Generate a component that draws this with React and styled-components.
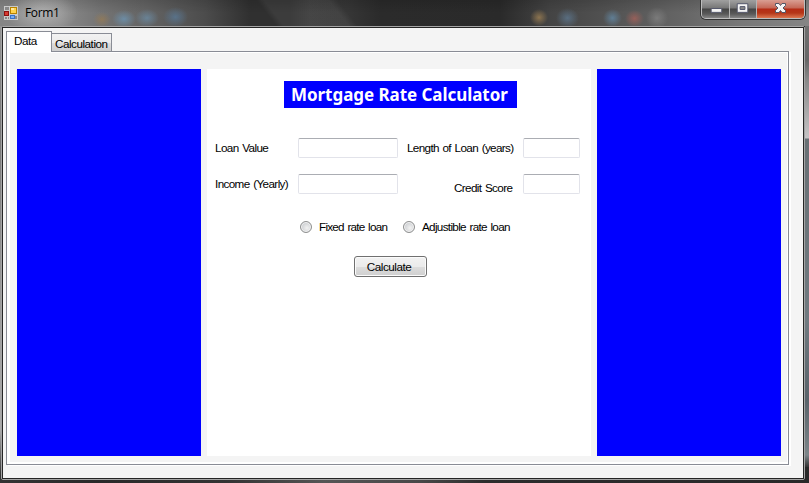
import React from 'react';
import styled, { createGlobalStyle } from 'styled-components';

const GlobalStyle = createGlobalStyle`
  * { box-sizing: border-box; }
  html, body { margin: 0; padding: 0; overflow: hidden; }
`;

const Window = styled.div`
  width: 809px;
  height: 483px;
  display: flex;
  flex-direction: column;
  padding: 0 4px 3px 1px;
  font: 11.7px/14px 'Liberation Sans', Arial, sans-serif;
  word-spacing: 1px;
  color: #000;
  background:
    linear-gradient(#777 0, #666 60px, #888 80px, #c5c3c4 138px, #687074 139px, #707a80 320px, #59636a 400px, #7c8589 455px, #333 467px) right 0 top 0 / 4px 467px no-repeat,
    linear-gradient(#999 0, #777 130px, #999 300px, #aaa 430px, #333 475px) left top / 2px 483px no-repeat,
    linear-gradient(90deg, #333, #292929 12%, #333 28%, #555 40%, #484848 52%, #2c2c2c 60%, #292929);
`;

const TitleBar = styled.header`
  height: 26px;
  flex: none;
  display: flex;
  margin: 0 -4px 0 -1px;
  padding-left: 4px;
  background:
    radial-gradient(ellipse at center, rgba(200, 200, 200, .62), rgba(180, 180, 180, 0) 70%) 6px -8px / 72px 42px no-repeat,
    radial-gradient(closest-side, rgba(159, 125, 77, .6), transparent) 93px 12px / 18px 15px no-repeat,
    radial-gradient(closest-side, rgba(109, 151, 183, .75), transparent) 112px 10px / 24px 18px no-repeat,
    radial-gradient(closest-side, rgba(109, 151, 183, .6), transparent) 135px 9px / 24px 18px no-repeat,
    radial-gradient(closest-side, rgba(89, 131, 170, .6), transparent) 163px 7px / 25px 20px no-repeat,
    radial-gradient(closest-side, rgba(190, 150, 90, .6), transparent) 530px 9px / 18px 17px no-repeat,
    radial-gradient(closest-side, rgba(100, 134, 165, .6), transparent) 556px 8px / 23px 20px no-repeat,
    radial-gradient(closest-side, rgba(100, 140, 170, .75), transparent) 603px 9px / 19px 18px no-repeat,
    radial-gradient(closest-side, rgba(190, 100, 90, .6), transparent) 625px 10px / 19px 17px no-repeat,
    radial-gradient(closest-side, rgba(150, 150, 150, .5), transparent) 646px 7px / 22px 22px no-repeat,
    linear-gradient(rgba(0, 0, 0, .13), transparent 50%),
    linear-gradient(52deg, transparent 218px, rgba(255, 255, 255, .06) 224px, rgba(255, 255, 255, .06) 275px, transparent 282px),
    linear-gradient(90deg, #858585 0, #8a8a8a 60px, #747474 100px, #606060 155px, #4c4c4c 205px, #303030 250px, #303030 290px, #3a3a3a 310px, #363636 348px, #2b2b2b 380px, #2a2a2a 500px, #444 550px, #505050 600px, #656565 680px, #777 740px, #858585);
`;

const AppIcon = styled.svg`
  width: 14px;
  height: 14px;
  margin-top: 6px;
`;

const Caption = styled.span`
  margin: 5px auto 0 7px;
  font: 12px/16px 'Open Sans', 'Noto Sans', sans-serif;
  letter-spacing: -.35px;
`;

const WindowButtons = styled.div`
  display: flex;
  width: 104px;
  height: 19px;
  margin-right: 4px;
  border: 1px solid #bdbdbd;
  border-top: 0;
  border-radius: 0 0 5px 5px;
  box-shadow: 0 0 0 1px #333;
  overflow: hidden;
`;

const WindowButton = styled.div`
  width: ${p => p.$w}px;
  height: 18px;
  border-right: 1px solid #b5b5b5;
  background: ${p => p.$close
    ? 'linear-gradient(#d99e92, #c46756 8px, #b52b15 9px, #b53618 13px, #dc7751)'
    : 'linear-gradient(#a0a0a0, #777 8px, #454545 9px, #5a5a5a 14px, #858585)'};
  &:last-child { border-right: 0; }
  svg { display: block; width: 100%; height: 18px; }
`;

const Client = styled.main`
  flex: 1;
  min-height: 0;
  border: 1px solid #a5a5a5;
  border-radius: 2px;
`;

const ClientInner = styled.div`
  height: 100%;
  border: 1px solid #252525;
  background: #f4f4f4;
  padding: 3px 12px 12px 3px;
`;

const Tabs = styled.nav`
  height: 20px;
  display: flex;
  align-items: flex-end;
`;

const Tab = styled.button`
  width: ${p => p.$active ? 46 : 60}px;
  height: ${p => p.$active ? 21 : 18}px;
  margin: 0 0 ${p => p.$active ? -1 : 0}px;
  padding: ${p => p.$active ? '0 0 2px 7px' : '2px 0 0 3px'};
  border: 1px solid #898c95;
  border-bottom: 0;
  border-left-width: ${p => p.$active ? 1 : 0}px;
  background: ${p => p.$active ? '#fff' : 'linear-gradient(#f2f2f2, #ebebeb 50%, #dddddd 51%, #cfcfcf)'};
  position: relative;
  font: inherit;
  letter-spacing: ${p => p.$track};
  text-align: left;
  white-space: nowrap;
`;

const TabPage = styled.section`
  width: 783px;
  height: 414px;
  border: 1px solid #898c95;
  background: #fff;
  padding: 1px 1px 2px 3px;
  box-shadow: 2px 1px 0 #fff;
`;

const Page = styled.div`
  height: 409px;
  background: #f4f4f4;
  padding: 16px 6px 6px 7px;
  display: flex;
  gap: 6px;
`;

const SidePanel = styled.div`
  width: 184px;
  height: 387px;
  background: #00f;
`;

const Form = styled.form`
  width: 384px;
  height: 387px;
  background: #fff;
  padding-top: 12px;
`;

const Heading = styled.h1`
  width: 233px;
  height: 27px;
  margin: 0 0 30px 77px;
  padding-left: 7px;
  background: #00f;
  color: #fff;
  font: bold 17px/28px 'Noto Sans', sans-serif;
  letter-spacing: -.05px;
  word-spacing: 0;
  white-space: nowrap;
`;

const Fields = styled.div`
  display: grid;
  grid-template-columns: 83px 100px 125px 57px;
  grid-template-rows: 20px 20px;
  row-gap: 16px;
  margin-left: 8px;
`;

const Label = styled.label`
  padding-top: ${p => p.$top || 3}px;
  padding-left: ${p => p.$indent || 0}px;
  letter-spacing: ${p => p.$track};
  white-space: nowrap;
`;

const Input = styled.input`
  width: 100%;
  height: 20px;
  border: 1px solid #e2e3ea;
  border-top-color: #abadb3;
  border-radius: 2px;
  background: #fff;
  padding: 0 3px;
  outline: 0;
`;

const Choices = styled.div`
  display: flex;
  margin: 26px 0 0 93px;
`;

const Choice = styled.label`
  display: flex;
  align-items: center;
  gap: 7px;
  width: 103px;
  height: 14px;
  letter-spacing: ${p => p.$track};
  white-space: nowrap;
`;

const Radio = styled.input`
  appearance: none;
  flex: none;
  width: 12px;
  height: 12px;
  margin: 0;
  border: 1px solid #8e8f8f;
  border-radius: 50%;
  background: radial-gradient(circle at 60% 60%, #f2f2f2, #cfd1d4 65%);
  box-shadow: inset 0 0 0 1px #f4f4f4;
`;

const Button = styled.button`
  display: block;
  width: 73px;
  height: 21px;
  margin: 22px 0 0 147px;
  padding: 0 3px 0 0;
  border: 1px solid #707070;
  border-radius: 3px;
  box-shadow: inset 0 0 0 1px #fbfbfb;
  background: linear-gradient(#f2f2f2, #ebebeb 50%, #dddddd 51%, #cfcfcf);
  font: inherit;
  letter-spacing: ${p => p.$track};
`;

export default function App() {
  return (
    <>
      <GlobalStyle />
      <Window>
        <TitleBar>
          <AppIcon viewBox="0 0 14 14" shapeRendering="crispEdges">
            <path fill="#c9c9c9" d="M0 0h14v14H0z" />
            <path fill="#888" d="M1 1h4v3H1zM1 11h2v2H1zM4 11h1v2H4zM11 10h2v3h-2z" />
            <path fill="#8c1010" d="M0 5h5v5H0z" />
            <path fill="#d63a31" d="M1 6h3v3H1z" />
            <path fill="#b88300" d="M6 1h7v7H6z" />
            <path fill="#ffd34d" d="M7 2h5v5H7z" />
            <path fill="#ffeaa0" d="M7 2h3v2H7z" />
            <path fill="#3972c7" d="M6 9h5v4H6z" />
            <path fill="#79adf2" d="M7 10h3v2H7z" />
          </AppIcon>
          <Caption>Form1</Caption>
          <WindowButtons>
            <WindowButton $w={28}>
              <svg viewBox="0 0 28 18"><path d="M9.500 8.500h11v4h-11z" fill="#f4f4f4" stroke="#52556a" /></svg>
            </WindowButton>
            <WindowButton $w={27}>
              <svg viewBox="0 0 27 18">
                <path d="M7.500 3.500h11v9h-11z" fill="#f4f4f4" stroke="#52556a" />
                <path d="M10.500 6.500h5v3h-5z" fill="#888" stroke="#52556a" />
              </svg>
            </WindowButton>
            <WindowButton $w={47} $close>
              <svg viewBox="0 0 47 18"><path d="M18.500 3.500h3.500l1.500 2 1.500-2h3.500v2l-2.500 2.500 2.500 2.500v2h-3.500l-1.500-2-1.500 2h-3.500v-2l2.500-2.500-2.500-2.500z" fill="#f5f5f5" stroke="#535666" /></svg>
            </WindowButton>
          </WindowButtons>
        </TitleBar>
        <Client>
          <ClientInner>
            <Tabs>
              <Tab $active $track="-.48px">Data</Tab>
              <Tab $track="-.48px">Calculation</Tab>
            </Tabs>
            <TabPage>
              <Page>
                <SidePanel />
                <Form>
                  <Heading>Mortgage Rate Calculator</Heading>
                  <Fields>
                    <Label htmlFor="loan" $track="-.6px">Loan Value</Label>
                    <Input id="loan" />
                    <Label htmlFor="length" $indent={9} $track="-.64px">Length of Loan (years)</Label>
                    <Input id="length" />
                    <Label htmlFor="income" $track="-.62px">Income (Yearly)</Label>
                    <Input id="income" />
                    <Label htmlFor="score" $indent={56} $top={7} $track="-.64px">Credit Score</Label>
                    <Input id="score" />
                  </Fields>
                  <Choices>
                    <Choice $track="-.74px"><Radio type="radio" name="rate" />Fixed rate loan</Choice>
                    <Choice $track="-.68px"><Radio type="radio" name="rate" />Adjustible rate loan</Choice>
                  </Choices>
                  <Button type="button" $track="-.48px">Calculate</Button>
                </Form>
                <SidePanel />
              </Page>
            </TabPage>
          </ClientInner>
        </Client>
      </Window>
    </>
  );
}
